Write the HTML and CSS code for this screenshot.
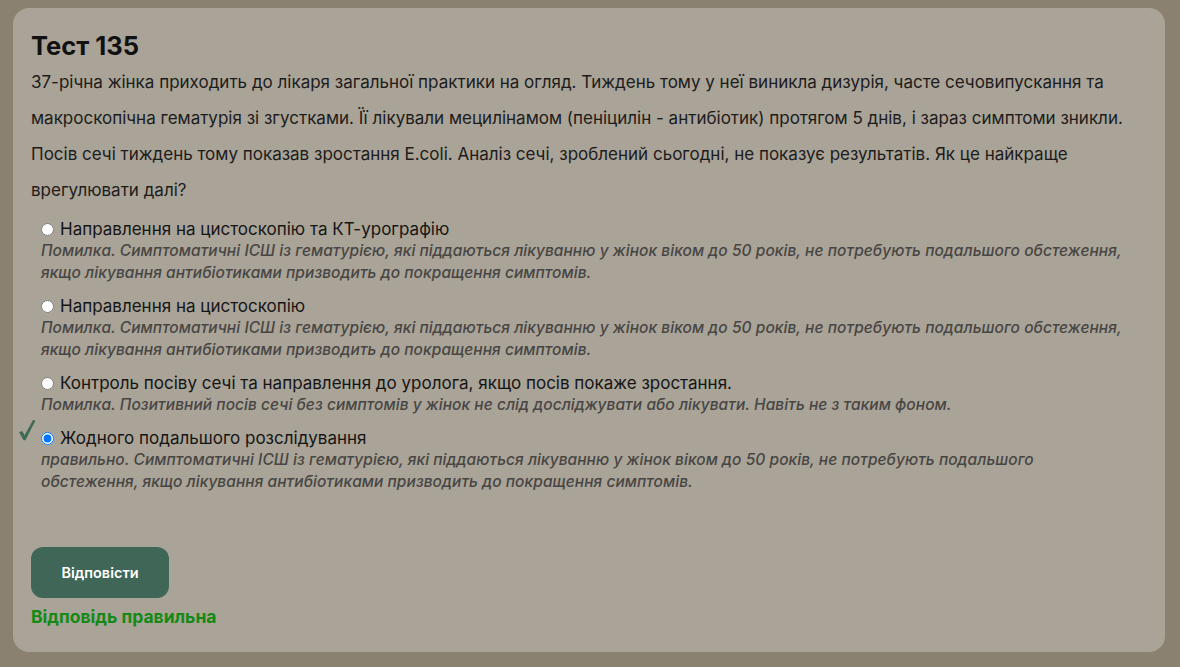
FILE: index.html
```html
<!DOCTYPE html>
<html lang="uk">
<head>
<meta charset="utf-8">
<title>Тест 135</title>
<link rel="stylesheet" href="styles.css">
</head>
<body>
<main class="card">
  <h1 class="title">Тест 135</h1>
  <p class="question">37-річна жінка приходить до лікаря загальної практики на огляд. Тиждень тому у неї виникла дизурія, часте сечовипускання та макроскопічна гематурія зі згустками. Її лікували мецилінамом (пеніцилін - антибіотик) протягом 5 днів, і зараз симптоми зникли. Посів сечі тиждень тому показав зростання E.coli. Аналіз сечі, зроблений сьогодні, не показує результатів. Як це найкраще врегулювати далі?</p>
  <div class="options">
    <div class="option">
      <label class="opt-label"><input type="radio" name="a"> Направлення на цистоскопію та КТ-урографію</label>
      <div class="expl">Помилка. Симптоматичні ІСШ із гематурією, які піддаються лікуванню у жінок віком до 50 років, не потребують подальшого обстеження, якщо лікування антибіотиками призводить до покращення симптомів.</div>
    </div>
    <div class="option">
      <label class="opt-label"><input type="radio" name="a"> Направлення на цистоскопію</label>
      <div class="expl">Помилка. Симптоматичні ІСШ із гематурією, які піддаються лікуванню у жінок віком до 50 років, не потребують подальшого обстеження, якщо лікування антибіотиками призводить до покращення симптомів.</div>
    </div>
    <div class="option">
      <label class="opt-label"><input type="radio" name="a"> Контроль посіву сечі та направлення до уролога, якщо посів покаже зростання.</label>
      <div class="expl">Помилка. Позитивний посів сечі без симптомів у жінок не слід досліджувати або лікувати. Навіть не з таким фоном.</div>
    </div>
    <div class="option correct">
      <svg class="check" width="18" height="22" viewBox="0 0 18 22" aria-hidden="true"><path d="M1 13.2 L4.2 12 L6.6 16.2 L15.2 0.8 L17.4 1.8 L7.4 21.2 L5.6 21.2 Z" fill="#3f6a55"/></svg>
      <label class="opt-label"><input type="radio" name="a" checked> Жодного подальшого розслідування</label>
      <div class="expl">правильно. Симптоматичні ІСШ із гематурією, які піддаються лікуванню у жінок віком до 50 років, не потребують подальшого обстеження, якщо лікування антибіотиками призводить до покращення симптомів.</div>
    </div>
  </div>
  <button class="btn" type="button">Відповісти</button>
  <div class="result">Відповідь правильна</div>
</main>
</body>
</html>
```

FILE: styles.css
```css
* { box-sizing: border-box; }
html, body { margin: 0; padding: 0; }
body {
  background: #8b8170;
  padding: 8px 15px 15px 13px;
  font-family: Inter, "Noto Sans", sans-serif;
  color: #1b1b1b;
}
.card {
  background: #aaa397;
  border-radius: 16px;
  padding: 24px 18px 24px 18px;
  min-height: 644px;
  display: flex;
  flex-direction: column;
}
.title {
  margin: 0;
  font-size: 25.5px;
  font-weight: 700;
  line-height: 28px;
  color: #111;
}
.question {
  margin: 4px 0 0;
  font-size: 17px;
  line-height: 36px;
  color: #1c1c1c;
}
.options {
  margin-top: 10px;
  padding-left: 10px;
  display: flex;
  flex-direction: column;
  gap: 11px;
}
.option { position: relative; }
.opt-label {
  display: flex;
  align-items: center;
  font-size: 17px;
  line-height: 22px;
  color: #151515;
}
.opt-label input {
  margin: 0 6px 0 0;
  width: 13px;
  height: 13px;
}
.expl {
  font-size: 15.5px;
  line-height: 22px;
  font-style: italic;
  font-weight: 500;
  letter-spacing: 0.05px;
  color: #474644;
  padding-right: 18px;
}
.check {
  position: absolute;
  left: -23px;
  top: -8px;
}
.btn {
  align-self: flex-start;
  margin-top: 54px;
  width: 138px;
  height: 51px;
  border: 0;
  border-radius: 12px;
  background: #3f6656;
  color: #fff;
  font-family: inherit;
  font-size: 14.5px;
  font-weight: 600;
}
.result {
  margin-top: 8px;
  font-size: 17.5px;
  line-height: 22px;
  font-weight: 700;
  color: #148a14;
}
```
